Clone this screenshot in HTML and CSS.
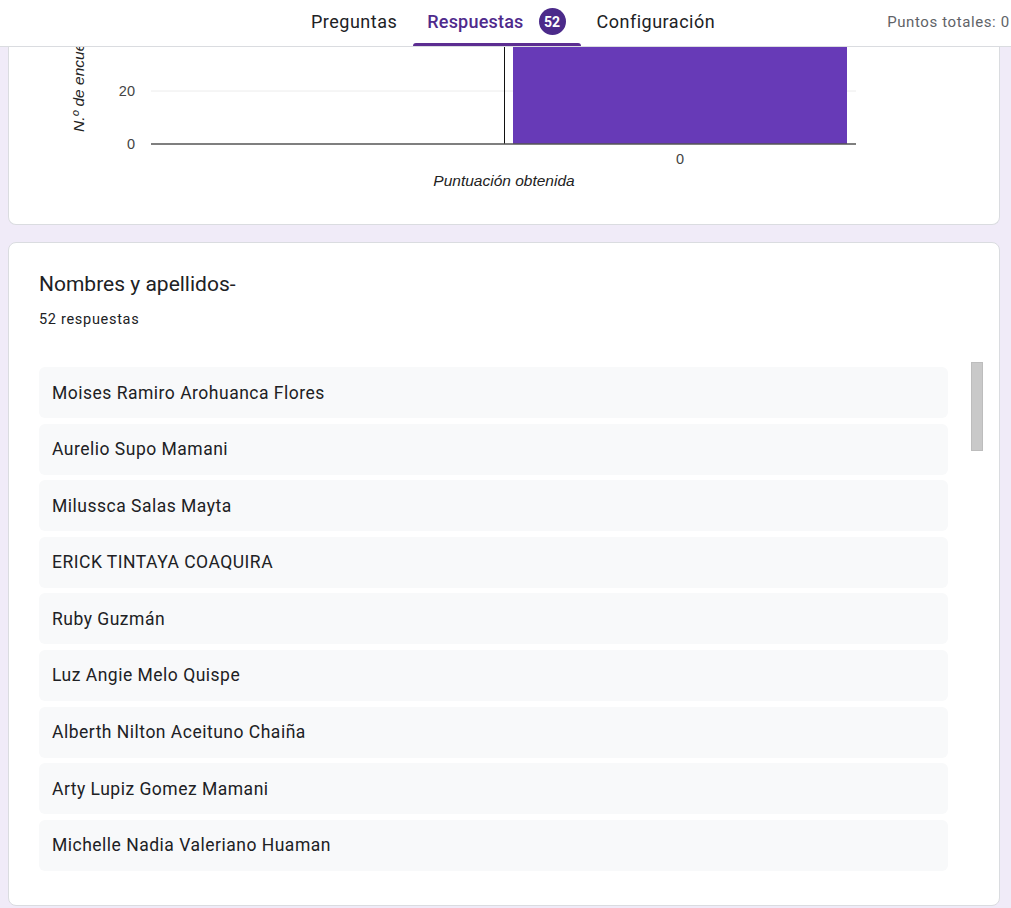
FILE: index.html
```html
<!DOCTYPE html>
<html lang="es">
<head>
<meta charset="utf-8">
<title>Respuestas</title>
<link rel="stylesheet" href="styles.css">
</head>
<body>
<header class="topbar">
  <nav class="tabs">
    <a class="tab">Preguntas</a>
    <a class="tab tab-active">Respuestas <span class="badge">52</span></a>
    <a class="tab">Configuración</a>
  </nav>
  <div class="points">Puntos totales: 0</div>
</header>

<main class="content">
  <section class="card chart-card">
    <svg class="chart" width="991" height="177" viewBox="0 0 991 177">
      <text class="axis-title" transform="translate(75 85) rotate(-90)">N.º de encuestados</text>
      <line x1="142" y1="44" x2="847" y2="44" class="grid"/>
      <text x="126" y="49" class="tick" text-anchor="end">20</text>
      <text x="126" y="102" class="tick" text-anchor="end">0</text>
      <rect x="504" y="-10" width="334" height="107" class="bar"/>
      <line x1="495.5" y1="-10" x2="495.5" y2="97" class="marker"/>
      <line x1="142" y1="97" x2="847" y2="97" class="baseline"/>
      <text x="671" y="117" class="tick" text-anchor="middle">0</text>
      <text x="495" y="139" class="axis-title" text-anchor="middle">Puntuación obtenida</text>
    </svg>
  </section>

  <section class="card answers-card">
    <h2 class="question">Nombres y apellidos-</h2>
    <p class="count">52 respuestas</p>
    <div class="answers">
      <ul class="answer-list">
        <li class="answer">Moises Ramiro Arohuanca Flores</li>
        <li class="answer">Aurelio Supo Mamani</li>
        <li class="answer">Milussca Salas Mayta</li>
        <li class="answer">ERICK TINTAYA COAQUIRA</li>
        <li class="answer">Ruby Guzmán</li>
        <li class="answer">Luz Angie Melo Quispe</li>
        <li class="answer">Alberth Nilton Aceituno Chaiña</li>
        <li class="answer">Arty Lupiz Gomez Mamani</li>
        <li class="answer">Michelle Nadia Valeriano Huaman</li>
      </ul>
      <div class="scroll-track"><div class="scroll-thumb"></div></div>
    </div>
  </section>
</main>
</body>
</html>
```

FILE: styles.css
```css
* {
  box-sizing: border-box;
}

html, body {
  margin: 0;
  height: 100%;
  overflow: hidden;
}

body {
  background: #f0ebf8;
  font-family: Roboto, "Liberation Sans", Arial, sans-serif;
  color: #202124;
}

/* top tab bar */
.topbar {
  height: 47px;
  background: #fff;
  border-bottom: 1px solid #dadce0;
  display: flex;
  align-items: stretch;
  white-space: nowrap;
  overflow: hidden;
}

.tabs {
  display: flex;
  margin-left: 295px;
}

.tab {
  position: relative;
  display: flex;
  align-items: center;
  gap: 15px;
  padding: 0 16px 3px;
  font-size: 18px;
  font-weight: 400;
  letter-spacing: 0.5px;
  color: #202124;
}

.tab-active {
  padding-left: 14px;
  padding-right: 15px;
  color: #4f2a8c;
  font-weight: 500;
  letter-spacing: 0.2px;
}

.tab-active::after {
  content: "";
  position: absolute;
  left: 0;
  right: 0;
  bottom: -1px;
  height: 4px;
  background: #5c2d91;
  border-radius: 3px 3px 0 0;
}

.badge {
  display: inline-flex;
  align-items: center;
  justify-content: center;
  width: 27px;
  height: 27px;
  border-radius: 50%;
  background: #4b2a8a;
  color: #fff;
  font-size: 14px;
  font-weight: 700;
  letter-spacing: 0;
}

.points {
  margin-left: 156px;
  padding-bottom: 3px;
  display: flex;
  align-items: center;
  font-size: 15px;
  letter-spacing: 0.6px;
  color: #5f6368;
}

/* page content */
.content {
  padding: 0 11px 0 8px;
  display: flex;
  flex-direction: column;
  gap: 17px;
}

.card {
  background: #fff;
  border: 1px solid #dadce0;
}

.chart-card {
  height: 178px;
  border-top: none;
  border-radius: 0 0 8px 8px;
}

.chart {
  display: block;
  overflow: hidden;
}

.chart text {
  font-family: "Liberation Sans", Arial, sans-serif;
}

.tick {
  font-size: 14.5px;
  fill: #444;
}

.axis-title {
  font-size: 15.5px;
  font-style: italic;
  fill: #222;
}

.grid {
  stroke: #ececec;
  stroke-width: 1;
}

.baseline {
  stroke: #555;
  stroke-width: 1.5;
}

.marker {
  stroke: #111;
  stroke-width: 1;
}

.bar {
  fill: #673ab7;
}

.answers-card {
  border-radius: 8px;
  padding: 27px 14px 34px 30px;
}

.question {
  margin: 0;
  font-size: 21px;
  font-weight: 400;
  line-height: 28px;
}

.count {
  margin: 14px 0 0;
  font-size: 14.5px;
  letter-spacing: 0.7px;
  line-height: 16px;
}

.answers {
  display: flex;
  gap: 23px;
  margin-top: 34px;
}

.answer-list {
  list-style: none;
  margin: 5px 0 0;
  padding: 0;
  width: 909px;
  display: flex;
  flex-direction: column;
  gap: 5.6px;
}

.answer {
  height: 51px;
  display: flex;
  align-items: center;
  padding-left: 13px;
  background: #f8f9fa;
  border-radius: 6px;
  font-size: 17.5px;
  letter-spacing: 0.5px;
}

.scroll-track {
  width: 12px;
}

.scroll-thumb {
  height: 89px;
  background: #c9c9c9;
  border: 1px solid #bdbdbd;
}
```
